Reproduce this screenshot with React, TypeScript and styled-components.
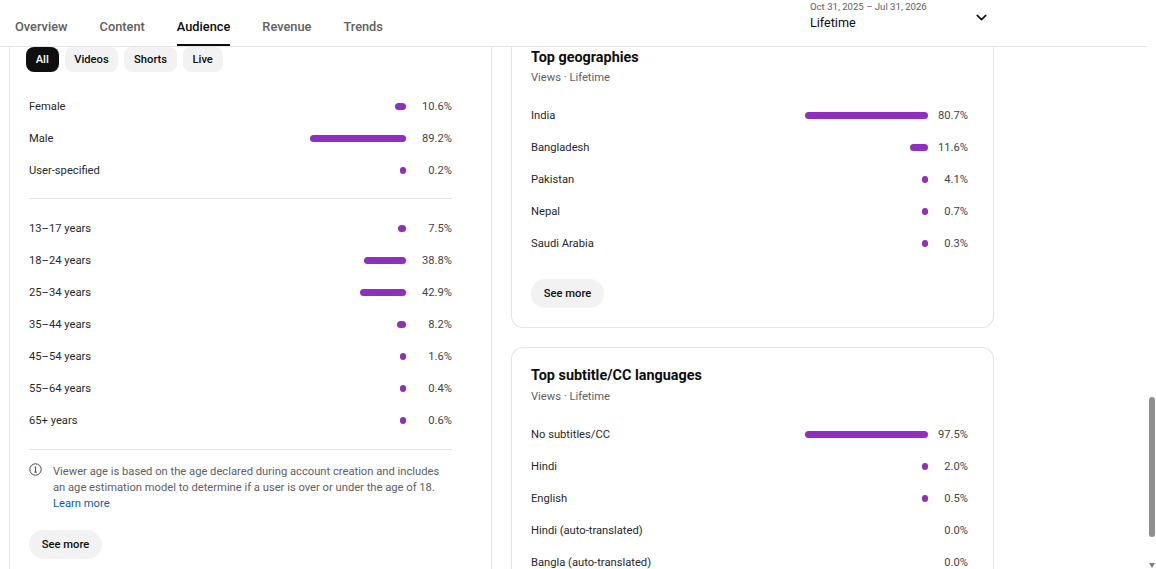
import React from "react";
import styled, { createGlobalStyle } from "styled-components";
import { ChevronDown } from "lucide-react";

const GlobalStyle = createGlobalStyle`
  html, body {
    margin: 0;
    height: 100%;
    overflow: hidden;
    background: #fff;
    font-family: Roboto, "Liberation Sans", sans-serif;
    color: #0d0d0d;
  }
`;

const Page = styled.div`
  position: relative;
  width: 1156px;
  height: 569px;
  overflow: hidden;
`;

const Header = styled.header`
  display: flex;
  align-items: stretch;
  justify-content: space-between;
  box-sizing: border-box;
  width: 1147px;
  height: 47px;
  padding-left: 15px;
  border-bottom: 1px solid #e5e5e5;
`;

const Tabs = styled.nav`
  display: flex;
  gap: 32px;
`;

const Tab = styled.div<{ $active?: boolean }>`
  display: flex;
  align-items: center;
  box-sizing: border-box;
  height: 46px;
  padding-top: 8px;
  font-size: 12.8px;
  font-weight: 500;
  color: ${(p) => (p.$active ? "#0d0d0d" : "#606060")};
  border-bottom: 2px solid ${(p) => (p.$active ? "#0d0d0d" : "transparent")};
`;

const DatePicker = styled.div`
  display: flex;
  align-items: flex-start;
  width: 337px;
`;

const DateText = styled.div`
  display: flex;
  flex-direction: column;
  width: 163px;
`;

const DateRange = styled.span`
  font-size: 9.6px;
  line-height: 13px;
  color: #606060;
`;

const DateLabel = styled.span`
  margin-top: 2px;
  font-size: 12.6px;
  line-height: 15px;
  color: #0d0d0d;
`;

const Chevron = styled(ChevronDown)`
  margin-top: 9px;
  width: 17px;
  height: 17px;
`;

const Main = styled.main`
  display: flex;
  align-items: flex-start;
  gap: 19px;
  padding-left: 9px;
`;

const LeftColumn = styled.div`
  display: flex;
  flex-direction: column;
  width: 483px;
`;

const RightColumn = styled.div`
  display: flex;
  flex-direction: column;
  gap: 19px;
  width: 483px;
`;

const Card = styled.section<{ $open?: "top" | "bottom" | "both" }>`
  box-sizing: border-box;
  width: 100%;
  padding: 0 25px 20px 19px;
  border: 1px solid #e5e5e5;
  border-radius: 12px;
  ${(p) =>
    p.$open === "top" &&
    "border-top: 0; border-top-left-radius: 0; border-top-right-radius: 0;"}
  ${(p) =>
    p.$open === "bottom" &&
    "border-bottom: 0; border-bottom-left-radius: 0; border-bottom-right-radius: 0;"}
  ${(p) => p.$open === "both" && "border-top: 0; border-bottom: 0; border-radius: 0;"}
`;

const AudienceCard = styled(Card)`
  height: 522px;
  padding-right: 39px;
`;

const ChipRow = styled.div`
  display: flex;
  gap: 6px;
  margin-left: -3px;
  margin-bottom: 18px;
`;

const Chip = styled.div<{ $active?: boolean }>`
  display: flex;
  align-items: center;
  height: 25px;
  padding: 0 9.7px;
  border-radius: 8px;
  font-size: 11.2px;
  font-weight: 500;
  background: ${(p) => (p.$active ? "#0f0f0f" : "#f2f2f2")};
  color: ${(p) => (p.$active ? "#fff" : "#0d0d0d")};
`;

const Row = styled.div<{ $percentWidth: number }>`
  display: grid;
  grid-template-columns: 1fr auto ${(p) => p.$percentWidth}px;
  align-items: center;
  height: 32px;
  padding-top: 1px;
  box-sizing: border-box;
  font-size: 11.2px;
`;

const RowLabel = styled.span`
  color: #282828;
`;

const BarTrack = styled.div<{ $width: number }>`
  display: flex;
  justify-content: flex-end;
  width: ${(p) => p.$width}px;
  margin-top: -1px;
`;

const Bar = styled.div`
  height: 7px;
  border-radius: 4px;
  background: #8f2fbd;
`;

const Percent = styled.span`
  text-align: right;
  color: #444;
`;

const Divider = styled.hr`
  margin: 12px 0 13px;
  border: 0;
  border-top: 1px solid #e5e5e5;
`;

const AgeDivider = styled(Divider)`
  margin: 13px 0 0;
`;

const Note = styled.div`
  display: flex;
  gap: 11px;
  margin-top: 14px;
  font-size: 11.2px;
  line-height: 16px;
  color: #606060;
`;

const InfoIcon = styled.svg`
  flex: none;
  width: 13px;
  height: 13px;
  margin-top: -1px;
`;

const LearnMore = styled.a`
  display: block;
  color: #0b5cb0;
`;

const SeeMore = styled.button`
  display: block;
  width: 73px;
  height: 29px;
  padding: 0;
  border: 0;
  border-radius: 15px;
  background: #f2f2f2;
  font-family: inherit;
  font-size: 11.2px;
  font-weight: 500;
  color: #0d0d0d;
`;

const AudienceSeeMore = styled(SeeMore)`
  margin-top: 18px;
`;

const GeoSeeMore = styled(SeeMore)`
  margin-top: 20px;
`;

const CardTitle = styled.h2`
  margin: 0;
  padding-top: 1px;
  font-size: 14.4px;
  line-height: 20px;
  font-weight: 700;
  color: #0d0d0d;
`;

const CardSubtitle = styled.p<{ $gap: number }>`
  margin: ${(p) => p.$gap}px 0 0;
  font-size: 11.2px;
  line-height: 16px;
  color: #606060;
`;

const RowList = styled.div`
  margin-top: 13px;
`;

const GeoCard = styled(Card)`
  height: 281px;
`;

const SubtitleCard = styled(Card)`
  padding-top: 17px;
  height: 240px;
`;

type Datum = { label: string; value: number };

const GENDERS: Datum[] = [
  { label: "Female", value: 10.6 },
  { label: "Male", value: 89.2 },
  { label: "User-specified", value: 0.2 },
];

const AGES: Datum[] = [
  { label: "13–17 years", value: 7.5 },
  { label: "18–24 years", value: 38.8 },
  { label: "25–34 years", value: 42.9 },
  { label: "35–44 years", value: 8.2 },
  { label: "45–54 years", value: 1.6 },
  { label: "55–64 years", value: 0.4 },
  { label: "65+ years", value: 0.6 },
];

const GEOGRAPHIES: Datum[] = [
  { label: "India", value: 80.7 },
  { label: "Bangladesh", value: 11.6 },
  { label: "Pakistan", value: 4.1 },
  { label: "Nepal", value: 0.7 },
  { label: "Saudi Arabia", value: 0.3 },
];

const LANGUAGES: Datum[] = [
  { label: "No subtitles/CC", value: 97.5 },
  { label: "Hindi", value: 2.0 },
  { label: "English", value: 0.5 },
  { label: "Hindi (auto-translated)", value: 0.0 },
  { label: "Bangla (auto-translated)", value: 0.0 },
];

const Rows = ({
  data,
  track,
  scale,
  percentWidth,
}: {
  data: Datum[];
  track: number;
  scale: number;
  percentWidth: number;
}) => (
  <>
    {data.map((d) => (
      <Row key={d.label} $percentWidth={percentWidth}>
        <RowLabel>{d.label}</RowLabel>
        <BarTrack $width={track}>
          {d.value > 0 && <Bar style={{ width: Math.max(6, d.value * scale) }} />}
        </BarTrack>
        <Percent>{d.value.toFixed(1)}%</Percent>
      </Row>
    ))}
  </>
);

const Scrollbar = styled.div`
  position: absolute;
  top: 397px;
  right: 1px;
  width: 6px;
  height: 140px;
  border-radius: 3px;
  background: #8f8f8f;
`;

const ScrollArrow = styled.div`
  position: absolute;
  right: 1px;
  bottom: 1px;
  width: 0;
  height: 0;
  border-left: 3px solid transparent;
  border-right: 3px solid transparent;
  border-top: 5px solid #7f7f7f;
`;

export default function App() {
  return (
    <Page>
      <GlobalStyle />
      <Header>
        <Tabs>
          <Tab>Overview</Tab>
          <Tab>Content</Tab>
          <Tab $active>Audience</Tab>
          <Tab>Revenue</Tab>
          <Tab>Trends</Tab>
        </Tabs>
        <DatePicker>
          <DateText>
            <DateRange>Oct 31, 2025 – Jul 31, 2026</DateRange>
            <DateLabel>Lifetime</DateLabel>
          </DateText>
          <Chevron strokeWidth={2.2} />
        </DatePicker>
      </Header>
      <Main>
        <LeftColumn>
          <AudienceCard $open="both">
            <ChipRow>
              <Chip $active>All</Chip>
              <Chip>Videos</Chip>
              <Chip>Shorts</Chip>
              <Chip>Live</Chip>
            </ChipRow>
            <Rows data={GENDERS} track={108} scale={1.076} percentWidth={46} />
            <Divider />
            <Rows data={AGES} track={108} scale={1.076} percentWidth={46} />
            <AgeDivider />
            <Note>
              <InfoIcon viewBox="0 0 13 13" fill="none" stroke="#444">
                <circle cx="6.5" cy="6.5" r="5.7" strokeWidth="1" />
                <path d="M5.6 4.2 6.6 3.8V9.2M5.4 9.2H7.8" strokeWidth="1" />
              </InfoIcon>
              <div>
                Viewer age is based on the age declared during account creation and includes
                an age estimation model to determine if a user is over or under the age of 18.
                <LearnMore>Learn more</LearnMore>
              </div>
            </Note>
            <AudienceSeeMore>See more</AudienceSeeMore>
          </AudienceCard>
        </LeftColumn>
        <RightColumn>
          <GeoCard $open="top">
            <CardTitle>Top geographies</CardTitle>
            <CardSubtitle $gap={2}>Views · Lifetime</CardSubtitle>
            <RowList>
              <Rows data={GEOGRAPHIES} track={123} scale={1.524} percentWidth={40} />
            </RowList>
            <GeoSeeMore>See more</GeoSeeMore>
          </GeoCard>
          <SubtitleCard $open="bottom">
            <CardTitle>Top subtitle/CC languages</CardTitle>
            <CardSubtitle $gap={3}>Views · Lifetime</CardSubtitle>
            <RowList>
              <Rows data={LANGUAGES} track={123} scale={1.262} percentWidth={40} />
            </RowList>
          </SubtitleCard>
        </RightColumn>
      </Main>
      <Scrollbar />
      <ScrollArrow />
    </Page>
  );
}
